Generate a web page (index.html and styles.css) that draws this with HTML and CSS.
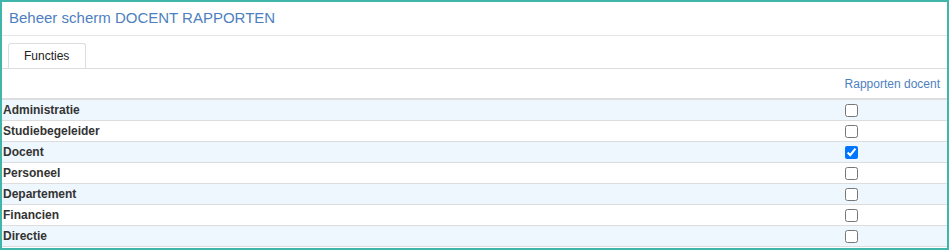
FILE: index.html
```html
<!DOCTYPE html>
<html lang="nl">
<head>
  <meta charset="UTF-8" />
  <title>Beheer scherm DOCENT RAPPORTEN</title>
  <link rel="stylesheet" href="styles.css">
</head>
<body>

  <div class="frame">
    <div class="title">Beheer scherm DOCENT RAPPORTEN</div>

    <div class="tabs">
      <div class="tab">Functies</div>
    </div>

    <table class="rights">
      <thead>
        <tr>
          <th class="label"></th>
          <th class="check">Rapporten docent</th>
        </tr>
      </thead>
      <tbody>
        <tr><td class="label">Administratie</td><td class="check"><input type="checkbox" /></td></tr>
        <tr><td class="label">Studiebegeleider</td><td class="check"><input type="checkbox" /></td></tr>
        <tr><td class="label">Docent</td><td class="check"><input type="checkbox" checked /></td></tr>
        <tr><td class="label">Personeel</td><td class="check"><input type="checkbox" /></td></tr>
        <tr><td class="label">Departement</td><td class="check"><input type="checkbox" /></td></tr>
        <tr><td class="label">Financien</td><td class="check"><input type="checkbox" /></td></tr>
        <tr><td class="label">Directie</td><td class="check"><input type="checkbox" /></td></tr>
      </tbody>
    </table>
  </div>

</body>
</html>
```

FILE: styles.css
```css
body {
  margin: 0;
  background: #ffffff;
  font-family: 'Liberation Sans', Arial, sans-serif;
  color: #333333;
}

.frame {
  width: 945px;
  height: 246px;
  border: 2px solid #3fb5ab;
  overflow: hidden;
}

.title {
  height: 33px;
  line-height: 31px;
  padding-left: 7px;
  font-size: 15px;
  color: #4d7fc0;
  border-bottom: 1px solid #e6e6e6;
}

.tabs {
  padding: 7px 0 0 6px;
  border-bottom: 1px solid #dddddd;
  display: flex;
}

.tab {
  height: 24px;
  line-height: 24px;
  padding: 0 16px 0 15px;
  font-size: 12px;
  color: #222222;
  border: 1px solid #dddddd;
  border-bottom: none;
  border-radius: 3px 3px 0 0;
}

.rights {
  width: 100%;
  border-collapse: collapse;
  font-size: 12px;
}

.rights th {
  height: 29px;
  font-weight: normal;
  color: #4d7fc0;
  text-align: left;
  white-space: nowrap;
  border-bottom: 2px solid #dddddd;
  padding: 0;
  vertical-align: middle;
}

.rights td {
  height: 20px;
  padding: 0;
  border-bottom: 1px solid #dddddd;
  vertical-align: middle;
}

.rights tbody tr:nth-child(odd) {
  background: #eff7fe;
}

.rights td.label {
  padding-left: 1px;
  font-weight: bold;
  color: #333333;
}

.rights .check {
  width: 95px;
  padding-right: 7px;
  text-align: left;
}

.rights input {
  margin: 0;
  width: 13px;
  height: 13px;
  vertical-align: middle;
}
```
